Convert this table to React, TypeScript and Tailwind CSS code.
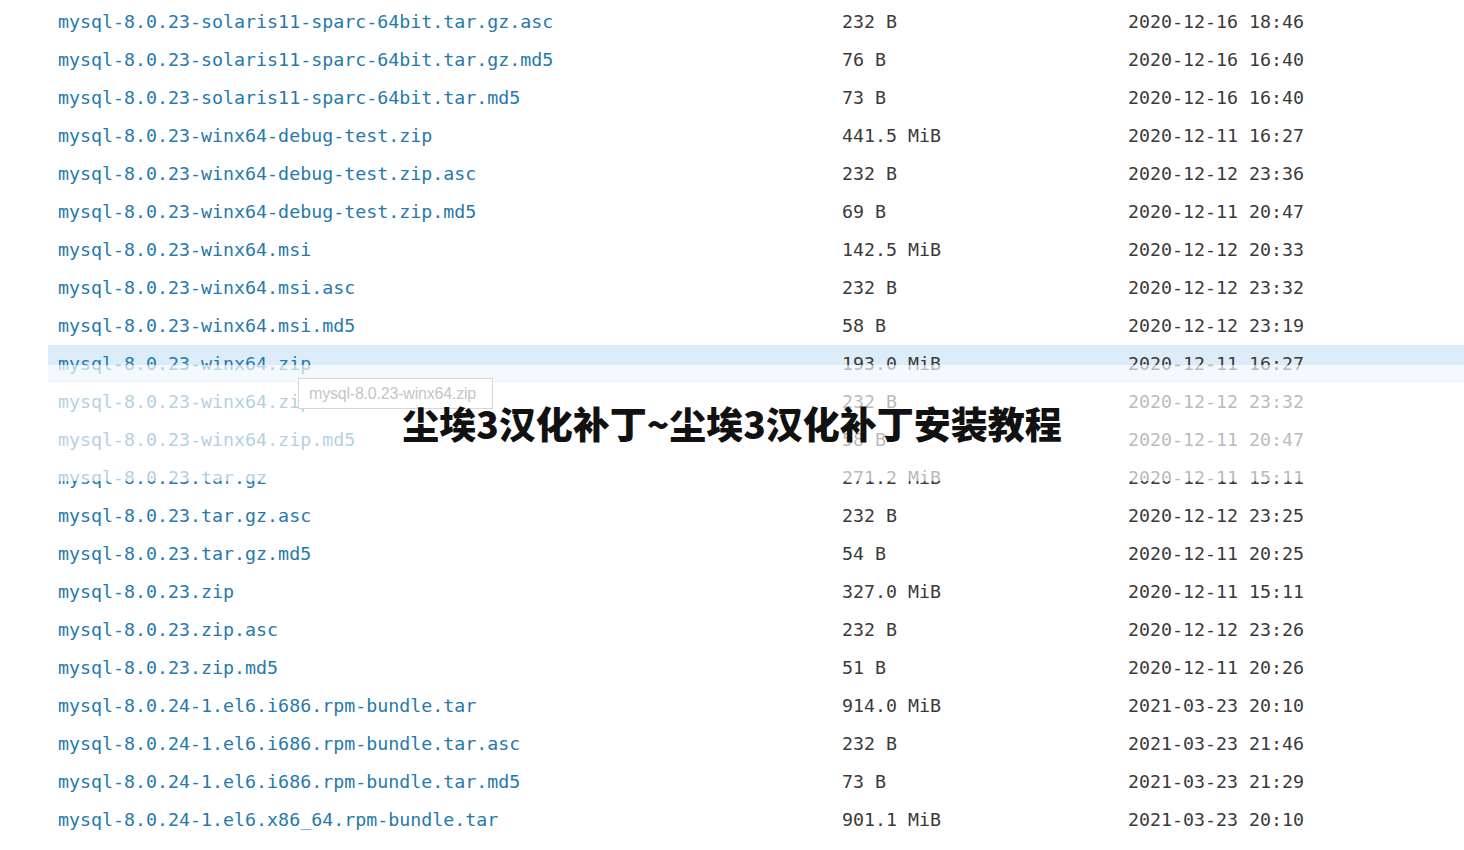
const rows: [string, string, string][] = [
  ["mysql-8.0.23-solaris11-sparc-64bit.tar.gz.asc", "232 B", "2020-12-16 18:46"],
  ["mysql-8.0.23-solaris11-sparc-64bit.tar.gz.md5", "76 B", "2020-12-16 16:40"],
  ["mysql-8.0.23-solaris11-sparc-64bit.tar.md5", "73 B", "2020-12-16 16:40"],
  ["mysql-8.0.23-winx64-debug-test.zip", "441.5 MiB", "2020-12-11 16:27"],
  ["mysql-8.0.23-winx64-debug-test.zip.asc", "232 B", "2020-12-12 23:36"],
  ["mysql-8.0.23-winx64-debug-test.zip.md5", "69 B", "2020-12-11 20:47"],
  ["mysql-8.0.23-winx64.msi", "142.5 MiB", "2020-12-12 20:33"],
  ["mysql-8.0.23-winx64.msi.asc", "232 B", "2020-12-12 23:32"],
  ["mysql-8.0.23-winx64.msi.md5", "58 B", "2020-12-12 23:19"],
  ["mysql-8.0.23-winx64.zip", "193.0 MiB", "2020-12-11 16:27"],
  ["mysql-8.0.23-winx64.zip.asc", "232 B", "2020-12-12 23:32"],
  ["mysql-8.0.23-winx64.zip.md5", "58 B", "2020-12-11 20:47"],
  ["mysql-8.0.23.tar.gz", "271.2 MiB", "2020-12-11 15:11"],
  ["mysql-8.0.23.tar.gz.asc", "232 B", "2020-12-12 23:25"],
  ["mysql-8.0.23.tar.gz.md5", "54 B", "2020-12-11 20:25"],
  ["mysql-8.0.23.zip", "327.0 MiB", "2020-12-11 15:11"],
  ["mysql-8.0.23.zip.asc", "232 B", "2020-12-12 23:26"],
  ["mysql-8.0.23.zip.md5", "51 B", "2020-12-11 20:26"],
  ["mysql-8.0.24-1.el6.i686.rpm-bundle.tar", "914.0 MiB", "2021-03-23 20:10"],
  ["mysql-8.0.24-1.el6.i686.rpm-bundle.tar.asc", "232 B", "2021-03-23 21:46"],
  ["mysql-8.0.24-1.el6.i686.rpm-bundle.tar.md5", "73 B", "2021-03-23 21:29"],
  ["mysql-8.0.24-1.el6.x86_64.rpm-bundle.tar", "901.1 MiB", "2021-03-23 20:10"],
];

export default function App() {
  return (
    <div className="relative h-[850px] w-[1464px] overflow-hidden bg-white">
      <div className="ml-[48px] pt-[3px] font-['DejaVu_Sans_Mono',monospace] text-[18.3px]">
        {rows.map(([name, size, date], i) => (
          <div
            key={name}
            className={`grid h-[38px] grid-cols-[784px_286px_1fr] items-center pl-[10px] ${i === 9 ? "bg-[#dcedf9]" : ""}`}
          >
            <span className="text-[#2679ad]">{name}</span>
            <span className="text-[#3a3a3a]">{size}</span>
            <span className="text-[#3a3a3a]">{date}</span>
          </div>
        ))}
      </div>

      {/* hover tooltip */}
      <div className="absolute left-[298px] top-[378px] flex h-[31px] w-[195px] items-center border border-[#8c8c8c] bg-white px-[10px] font-['Liberation_Sans',sans-serif] text-[16px] tracking-[-0.2px] text-[#555]">
        mysql-8.0.23-winx64.zip
      </div>

      {/* title band */}
      <div className="absolute left-0 right-0 top-[365px] flex h-[116px] items-center justify-center bg-white/65">
        <h1 className="font-['Noto_Sans_CJK_SC',sans-serif] text-[37px] font-black leading-none text-[#111]">
          尘埃3汉化补丁~尘埃3汉化补丁安装教程
        </h1>
      </div>
    </div>
  );
}
